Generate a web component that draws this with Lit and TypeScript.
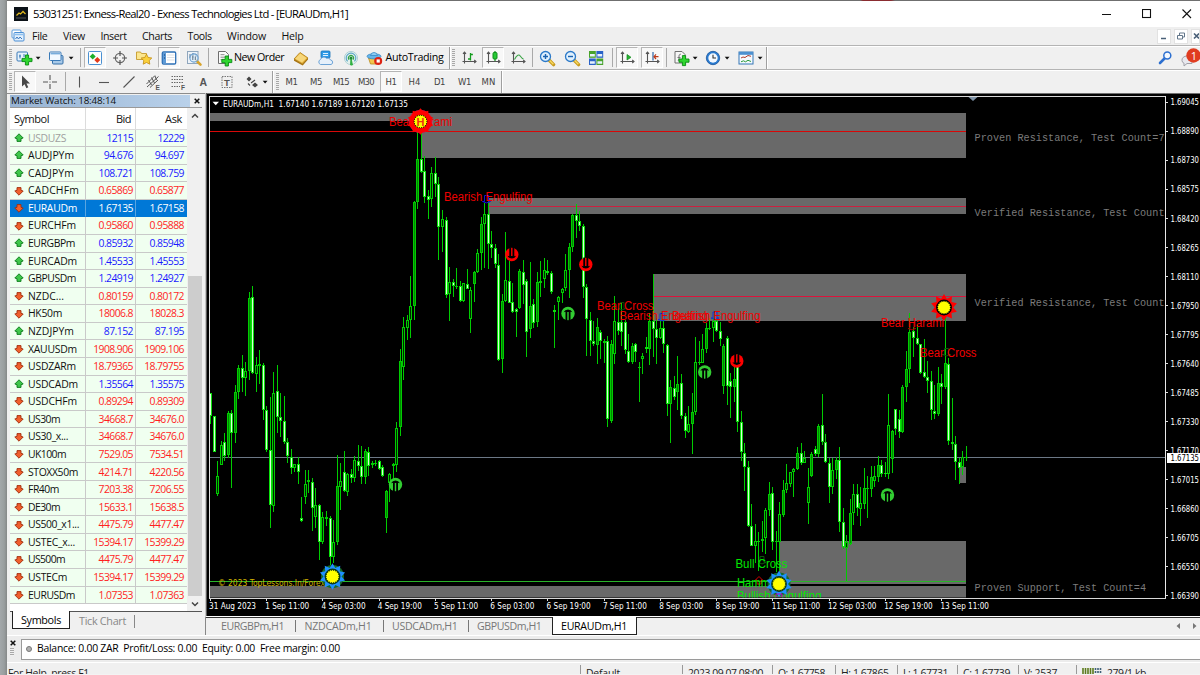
import { LitElement, html, svg, css } from "lit";
import { customElement, property } from "lit/decorators.js";
import { classMap } from "lit/directives/class-map.js";

/* A run of text whose tracking is adjusted so that it fills the given width. */
@customElement("fit-text")
class FitText extends LitElement {
  @property({ type: Number }) w = 0;
  static styles = css`
    :host { display: inline-block; white-space: pre; line-height: 1; }
  `;
  render() { return html`<slot></slot>`; }
  firstUpdated() {
    const n = (this.textContent || "").length;
    const now = this.getBoundingClientRect().width;
    if (n > 0 && this.w) this.style.letterSpacing = ((this.w - now) / n).toFixed(3) + "px";
  }
}

const fit = (t: string, w: number) => html`<fit-text .w=${w}>${t}</fit-text>`;

/* ---------- icons, drawn around the origin ---------- */
const plus = (x: number, y: number) => svg`<path d="M${x - 1.6} ${y - 5}h3.2v3.4h3.4v3.2h-3.4v3.4h-3.2v-3.4h-3.4v-3.2h3.4z" fill="#2fd62f" stroke="#078a12" stroke-width=".9"/>`;
const axes = svg`<path d="M-4.5 -5.5V5.5M-6.5 3.5H6.5M-6 -4.2l1.5 -1.8l1.5 1.8M5.2 2l1.8 1.5l-1.8 1.5" fill="none" stroke="#555" stroke-width="1.1"/>`;
const lens = (inner: any) => svg`<path d="M2 2l4.6 4.6" stroke="#c89a1c" stroke-width="3.4" stroke-linecap="round"/><path d="M2.4 2.2l4 4" stroke="#f8da64" stroke-width="1.3"/><circle cx="-1.5" cy="-1.5" r="5" fill="#dff0fd" stroke="#2b79c9" stroke-width="1.3"/>${inner}`;

const ICONS: Record<string, any> = {
  newchart: svg`<rect x="-7" y="-6" width="10.5" height="9" rx="1" fill="#e8f3fc" stroke="#3a7ab8"/><path d="M-4 -3.5v4M-5 -2h2M0 -4v3" stroke="#3a7ab8" fill="none"/>${plus(3, 2)}`,
  profiles: svg`<rect x="-3.5" y="-2.500" width="10.5" height="8.5" rx="1" fill="#a8c9e8" stroke="#346fa8"/><rect x="-6.5" y="-6" width="11.500" height="8.500" rx="1" fill="#f3f9ff" stroke="#3a7ab8"/><path d="M-5.5 -4.3h9.500" stroke="#79addb" stroke-width="1.4"/>`,
  market: svg`<rect x="-6.5" y="-6.5" width="13" height="13" rx="1" fill="#fdfeff" stroke="#4a90d2"/><path d="M-2.3 -4.500l3 3l-3 3l-3 -3z" fill="#1eaf2b"/><path d="M2.300 -1l3 3l-3 3l-3 -3z" fill="#e23a1a"/>`,
  target: svg`<circle r="4.7" fill="none" stroke="#666" stroke-width="1.2"/><path d="M0 -7v5M0 7v-5M-7 0h5M7 0h-5" stroke="#555" stroke-width="1.2"/>`,
  favorite: svg`<path d="M-7.5 -6h4l1 1.5h5v6h-10z" fill="#fbe68f" stroke="#c59a2a" stroke-width=".9"/><path d="M2.5 -3.8l1.7 3.3l3.6 .5l-2.6 2.6l.6 3.6l-3.3 -1.7l-3.3 1.7l.6 -3.6l-2.6 -2.6l3.6 -.5z" fill="#fbd13c" stroke="#c08a12" stroke-width=".8"/>`,
  panel: svg`<rect x="-6.7" y="-6" width="13.4" height="12" rx="1.3" fill="#fff" stroke="#2d70b7" stroke-width="1.3"/><rect x="-6" y="-5.3" width="3" height="10.6" fill="#5d9bd8"/><path d="M-2 -3h7.5M-2 -.5h7.5M-2 2h7.5" stroke="#d3d9e0" stroke-width=".8"/><path d="M-5 -3h1M-5 0h1" stroke="#12386a"/>`,
  tester: svg`<rect x="-6.5" y="-6.5" width="10.5" height="12" fill="#edf3f9" stroke="#8fa6bd"/><path d="M-4 -4v4M-1 -5v5M2 -4v3" stroke="#5d7388"/><path d="M2.8 3l3.7 3.6" stroke="#d8a42c" stroke-width="2.6" stroke-linecap="round"/><circle cx="0" cy="0" r="4.1" fill="#d9ecfb" fill-opacity=".6" stroke="#6a9fd0" stroke-width="1.1"/><path d="M-1.200 -2.500v4.500M1.300 -1.500v3.500" stroke="#5d7388"/>`,
  order: svg`<path d="M-5.5 -6.5h7l3 3v9h-10z" fill="#fafafa" stroke="#6e6e6e"/><path d="M-3.5 -3.3h4M-3.5 -.8h5M-3.5 1.7h3" stroke="#8a8a8a"/>${plus(2.8, 3)}`,
  gold: svg`<path d="M-7 1l6 -6.5l8 5.5l-5.5 6z" fill="#e9b53c" stroke="#b07c14" stroke-width=".8"/><path d="M-5.8 .8l5 -5.2l6.3 4.3l-4.5 4.7z" fill="#f7d77b"/><path d="M-7 1l8.5 5l5.5 -6v1.6l-5.3 5.9l-8.7 -4.8z" fill="#a87410"/>`,
  cloud: svg`<rect x="-5" y="-7" width="9" height="7" rx="1" fill="#2f9be8" stroke="#1871b8" stroke-width=".8"/><path d="M-3 -4.5h5M-3 -2.5h5" stroke="#dff1ff"/><path d="M-5.5 6.5a2.7 2.7 0 0 1 0 -5a3.5 3.5 0 0 1 6 -1.2a3 3 0 0 1 4 1.7a2.3 2.3 0 0 1 .5 4.5z" fill="#e6f0fa" stroke="#5d9ad3" stroke-width=".9"/>`,
  signal: svg`<circle r="6.6" fill="#e4f1ec" stroke="#a9cdd3" stroke-width=".9"/><path d="M-3.4 3.4a4.8 4.8 0 1 1 6.8 0" fill="none" stroke="#5ea7c8" stroke-width="1.2"/><path d="M-1.9 1.6a2.5 2.5 0 1 1 3.8 0" fill="none" stroke="#31a34a" stroke-width="1.2"/><path d="M0 0L1.4 7h-1.8z" fill="#30b040" stroke="#30b040"/><circle r="1.5" fill="#1d8a34"/>`,
  auto: svg`<path d="M-6.5 0h10l-2 6h-6z" fill="#f3c64d" stroke="#b88a1c" stroke-width=".8"/><ellipse cx="-1" cy="-1.700" rx="7" ry="2.6" fill="#66b5ea" stroke="#2f82c0" stroke-width=".7"/><path d="M-4.5 -2.500a3.6 4 0 0 1 7 0z" fill="#8fcdf3" stroke="#2f82c0" stroke-width=".7"/><circle cx="3.2" cy="3" r="4" fill="#dd2212"/><rect x="1.6" y="1.4" width="3.2" height="3.2" fill="#fff"/>`,
  bars: svg`${axes}<path d="M1.5 -5V2.5M1.5 -3.5h2.4M-1 1h2.5" stroke="#149c1e" stroke-width="1.3" fill="none"/>`,
  candles: svg`${axes}<path d="M2 -7V3" stroke="#0f8f1a" stroke-width="1.2"/><rect x="0" y="-5.5" width="4" height="6.5" rx="1" fill="#27c935" stroke="#0f8f1a"/>`,
  line: svg`${axes}<path d="M-3.5 1.5C-1 -3.5 1 -3.8 2.4 -1.8S4.5 .8 5.5 1" stroke="#3aa445" stroke-width="1.1" fill="none"/>`,
  zoomin: lens(svg`<path d="M-4 -1.5h5M-1.5 -4v5" stroke="#1b62b0" stroke-width="1.4"/>`),
  zoomout: lens(svg`<path d="M-4 -1.5h5" stroke="#1b62b0" stroke-width="1.4"/>`),
  tiles: svg`<rect x="-7" y="-7" width="6.8" height="6.800" fill="#48a32a"/><rect x=".4" y="-7" width="6.8" height="6.800" fill="#2a63c8"/><rect x="-7" y=".5" width="6.8" height="6.500" fill="#2a63c8"/><rect x=".4" y=".5" width="6.8" height="6.500" fill="#48a32a"/><path d="M-6 -4h4.800v2.400h-4.800zM1.400 -4h4.800v2.400h-4.800zM-6 3.300h4.800v2.400h-4.800zM1.400 3.300h4.800v2.400h-4.800z" fill="#e8f2fc"/>`,
  autoscroll: svg`${axes}<path d="M0 -3.5L4 -.7L0 2z" fill="#26b532" stroke="#128a1c" stroke-width=".7"/>`,
  shift: svg`${axes}<path d="M1 -6V2.5" stroke="#2d66a8" stroke-width="1.2"/><path d="M2 -1.3h4.5M4 -3.6L2 -1.3l2 2.3" stroke="#bd3a1a" stroke-width="1.2" fill="none"/>`,
  indicator: svg`<path d="M-6 -6.5h7l3 3v8.5h-10z" fill="#f6f6f6" stroke="#707070"/><path d="M-3 3c1 -1 1 -3 1 -5s1.500 -2 2 -1.500M-3.500 -.5h3" stroke="#777" fill="none"/>${plus(3, 2.6)}`,
  clock: svg`<circle r="6.7" fill="#2a7bd0" stroke="#1a559c" stroke-width=".8"/><circle r="4.7" fill="#f2f8ff"/><path d="M0 -3.2V0h3" stroke="#333" fill="none" stroke-width="1.1"/>`,
  template: svg`<rect x="-7" y="-6" width="14" height="12" fill="#f4f9fe" stroke="#3576b6"/><rect x="-7" y="-6" width="14" height="2.8" fill="#4b90d0"/><path d="M-5 0l2 -1l2 .5l3 -2l3 .8" stroke="#b03a2a" fill="none"/><path d="M-5 3.800l2.500 -1l2 1l2.500 -1.500l3 1.200" stroke="#2d9b3a" fill="none"/>`,
  pointer: svg`<path d="M-3 -6.500V4.500l2.600 -2.300l1.800 4l1.900 -.9l-1.800 -3.800h3.500z" fill="#484848"/>`,
  cross: svg`<path d="M0 -7v5M0 2v5M-7 0h5M2 0h5" stroke="#555" stroke-width="1.1"/><circle r=".6" fill="#555"/>`,
  vline: svg`<path d="M.5 -5.500V5.500" stroke="#555" stroke-width="1.1"/>`,
  hline: svg`<path d="M-5 .5H5" stroke="#555" stroke-width="1.1"/>`,
  diag: svg`<path d="M-5.500 5.500L5.500 -5.500" stroke="#555" stroke-width="1.1"/>`,
  channel: svg`<path d="M-6.500 2L2 -6.500M-6 5L5.500 -5.500M-3 5.500L5 -2M-4.500 -2l3 5M-1.500 -4.500l3 5.500M2 -6l1.500 4" stroke="#555" stroke-width="1"/><text x="2.500" y="8" font-size="6.500" class="it">E</text>`,
  fib: svg`<path d="M-6.500 -5.500H6M-6.500 -2.500H6M-6.500 .5H6M-6.500 4.500H2" stroke="#666" stroke-width="1" stroke-dasharray="1.500 1"/><text x="3" y="8" font-size="6.500" class="it">F</text>`,
  letter: svg`<text x="-3.600" y="4" font-size="10.500" class="it">A</text>`,
  label: svg`<rect x="-5" y="-5.500" width="10" height="11" fill="none" stroke="#777" stroke-dasharray="1.500 1"/><text x="-3" y="4" font-size="9.500" class="it">T</text>`,
  shapes: svg`<path d="M-5.500 -3l2.500 -2.500L-.5 -3L-3 -.5zM0 3l3 -2.500L6 3L3 5.500z" fill="#444"/><path d="M-4 1.500l2 2M-1 1l4 -3" stroke="#444" fill="none" stroke-width="1.100"/>`,
  drop: svg`<path d="M-2.300 -1.200h4.800L.1 1.500z" fill="#111"/>`,
};
const icon = (name: string, s = 18) => html`<svg class="ic" width=${s} height=${s} viewBox=${`${-s / 2} ${-s / 2} ${s} ${s}`}>${ICONS[name]}</svg>`;

/* Toolbar entries: kind, centre, width, optional label */
type Item = [string, number, number, string?];
const BAR1: Item[] = [
  ["grip", 10, 3], ["newchart", 24, 18], ["drop", 38, 6], ["profiles", 56, 18], ["drop", 70.5, 6], ["sep", 80.5, 1],
  ["+market", 95, 22], ["target", 120, 18], ["favorite", 144, 18], ["+panel", 169, 22], ["tester", 194, 18], ["sep", 208.5, 1],
  ["order", 224, 18], ["text", 259, 50, "New Order"], ["gold", 301, 18], ["cloud", 326, 18], ["signal", 351, 18], ["auto", 375, 18],
  ["text", 414.500, 58, "AutoTrading"], ["end", 450, 2], ["grip", 453.500, 3], ["bars", 469, 18], ["+candles", 493, 22], ["line", 518, 18],
  ["sep", 532.500, 1], ["zoomin", 547, 18], ["zoomout", 572, 18], ["tiles", 596, 18], ["sep", 612.500, 1], ["+autoscroll", 627, 22],
  ["+shift", 652, 22], ["sep", 666.500, 1], ["indicator", 681, 18], ["drop", 694.500, 6], ["clock", 713, 18], ["drop", 727, 6],
  ["template", 746, 18], ["drop", 759.500, 6], ["end", 767, 2],
];
const BAR2: Item[] = [
  ["grip", 10, 3], ["+pointer", 25, 22], ["cross", 50, 18], ["sep", 65, 1], ["vline", 79, 14], ["hline", 104, 14], ["diag", 129, 16],
  ["channel", 153, 18], ["fib", 178, 18], ["letter", 202.500, 14], ["label", 227, 14], ["shapes", 252, 16], ["drop", 265, 6], ["end", 273, 2],
  ["grip", 277, 3], ["tf", 291.500, 12, "M1"], ["tf", 316, 12, "M5"], ["tf", 341, 16, "M15"], ["tf", 366, 16, "M30"], ["+tf", 391, 22, "H1"],
  ["tf", 414.500, 12, "H4"], ["tf", 439.500, 11, "D1"], ["tf", 464.500, 13, "W1"], ["tf", 488.500, 14, "MN"], ["end", 502, 2],
];

const toolbar = (items: Item[]) => {
  let end = 7;
  return items.map(([k, c, w, label]) => {
    const gap = c - w / 2 - end;
    end = c + w / 2;
    const on = k[0] === "+";
    const name = on ? k.slice(1) : k;
    const st = `margin-left:${gap}px;width:${w}px`;
    if (name === "grip" || name === "sep" || name === "end") return html`<i class=${name} style=${st}></i>`;
    if (name === "text") return html`<span class="tbt" style=${st}>${fit(label!, w)}</span>`;
    if (name === "tf") return html`<span class=${classMap({ tf: true, on })} style=${st}>${fit(label!, on ? 11 : w)}</span>`;
    return html`<span class=${classMap({ slot: true, on })} style=${st}>${icon(name, name === "drop" ? 6 : 18)}</span>`;
  });
};

/* ---------- market watch ---------- */
const QUOTES: [string, string, string, number, number][] = [
  ["USDUZS", "12115", "12229", 1, 38], ["AUDJPYm", "94.676", "94.697", 1, 46], ["CADJPYm", "108.721", "108.759", 1, 46],
  ["CADCHFm", "0.65869", "0.65877", 0, 51], ["EURAUDm", "1.67135", "1.67158", 0, 49], ["EURCHFm", "0.95860", "0.95888", 0, 48],
  ["EURGBPm", "0.85932", "0.85948", 1, 47], ["EURCADm", "1.45533", "1.45553", 1, 49], ["GBPUSDm", "1.24919", "1.24927", 1, 48],
  ["NZDC...", "0.80159", "0.80172", 0, 36], ["HK50m", "18006.8", "18028.3", 0, 34], ["NZDJPYm", "87.152", "87.195", 1, 46],
  ["XAUUSDm", "1908.906", "1909.106", 0, 49], ["USDZARm", "18.79365", "18.79755", 0, 48], ["USDCADm", "1.35564", "1.35575", 1, 50],
  ["USDCHFm", "0.89294", "0.89309", 0, 49], ["US30m", "34668.7", "34676.0", 0, 32], ["US30_x...", "34668.7", "34676.0", 0, 40],
  ["UK100m", "7529.05", "7534.51", 0, 38], ["STOXX50m", "4214.71", "4220.56", 0, 50], ["FR40m", "7203.38", "7206.55", 0, 31],
  ["DE30m", "15633.1", "15638.5", 0, 32], ["US500_x1...", "4475.79", "4477.47", 0, 51], ["USTEC_x...", "15394.17", "15399.29", 0, 47],
  ["US500m", "4475.79", "4477.47", 0, 37], ["USTECm", "15394.17", "15399.29", 0, 39], ["EURUSDm", "1.07353", "1.07363", 0, 47],
];
const numW = (s: string) => [...s].reduce((a, ch) => a + (ch === "." ? 2.700 : 5.300), 0);
const arrow = (up: number) => html`<svg class="ar" width="10" height="10" viewBox="-5 -5 10 10"><path d="M0 -4.200L4.200 0L2 .7V3.400H-2V.7L-4.200 0z" transform=${up ? "" : "scale(1,-1)"} fill=${up ? "#3fc64b" : "#f0602c"} stroke=${up ? "#0a7a1a" : "#a02c0c"} stroke-width=".9"/></svg>`;

/* ---------- candles: high, body top, body bottom, low, kind ---------- */
const CANDLES = `393 393 416 424 d|416 416 452 452 d|461 476 494 496 u|441 445 465 465 u|433 442 456 461 d|411 413 455 458 g|410 413 433 488 d|385 392 433 443 g|365 368 392 399 g|355 368 378 392 d|362 371 378 396 u|292 298 371 380 g|286 297 373 374 d|357 365 374 392 u|350 364 366 384 u|363 365 410 420 d|406 410 450 452 d|397 450 505 528 d|372 393 506 512 u|365 391 417 433 d|393 417 421 437 d|396 421 442 444 d|438 442 456 463 d|449 457 468 474 d|464 464 468 472 u|457 464 472 484 d|497 518 521 522 d|470 484 497 504 u|470 480 482 493 u|478 482 508 531 d|488 505 517 528 u|504 505 542 560 d|512 517 542 544 u|511 517 519 526 u|516 518 557 565 d|520 542 557 563 u|455 486 542 545 g|463 481 487 510 u|451 472 491 492 d|473 474 492 496 u|469 474 478 483 d|456 460 478 482 u|445 461 466 471 d|446 466 477 484 d|449 451 477 484 g|447 452 466 476 d|461 463 465 468 u|460 463 464 466 u|460 461 469 470 d|465 467 476 477 d|490 491 518 533 g|473 474 483 502 u|463 464 466 482 u|422 428 465 472 u|349 361 427 436 g|317 327 367 380 u|315 320 328 340 u|276 306 320 338 u|201 202 306 320 g|132 159 202 209 g|132 159 172 173 d|156 171 197 203 d|190 196 200 219 d|167 173 199 207 u|157 173 184 197 d|177 184 227 260 d|210 219 227 252 u|217 220 295 298 d|267 282 294 321 u|279 282 286 297 d|268 286 287 289 u|281 286 301 302 d|283 283 301 302 u|269 284 289 289 d|287 290 319 333 u|271 272 284 302 g|249 253 272 273 u|217 224 253 270 g|203 214 224 268 u|202 214 244 269 d|231 244 248 258 d|244 248 264 268 d|254 265 360 361 d|294 301 359 373 g|232 280 301 302 u|261 281 303 303 d|283 302 312 313 d|308 309 312 337 d|269 271 308 309 g|260 272 285 304 d|279 281 332 357 d|262 306 329 338 g|299 304 323 328 d|272 282 322 327 g|261 281 283 297 u|258 270 279 288 u|260 271 273 275 d|271 273 292 294 d|305 310 312 348 d|296 297 302 320 u|288 289 293 303 u|254 270 288 291 u|243 247 270 298 g|214 215 247 252 g|204 215 221 238 d|211 221 226 231 d|224 226 287 298 d|284 287 319 356 d|312 320 341 356 d|321 341 344 346 d|318 327 345 364 g|330 332 341 359 d|339 341 343 363 u|336 341 419 427 d|340 344 421 423 g|296 321 354 364 u|308 322 331 335 d|303 322 332 346 d|320 322 350 354 d|334 351 362 363 d|343 346 362 364 g|343 344 352 362 d|362 367 368 402 u|353 356 359 374 u|337 347 349 353 d|313 321 349 365 g|274 321 329 357 d|318 329 338 364 d|320 328 338 339 u|317 328 344 353 d|344 345 404 416 d|380 387 404 443 g|376 388 397 400 d|356 384 392 410 g|374 383 416 419 d|413 416 431 438 d|406 424 432 433 u|393 412 424 454 g|337 362 412 415 u|341 362 363 365 u|334 349 363 363 u|323 328 349 353 g|318 328 329 330 u|318 321 328 342 u|318 321 331 332 d|322 331 339 346 d|344 346 386 394 g|336 338 386 405 d|373 381 387 418 d|363 379 387 402 g|354 355 422 432 d|411 422 452 461 d|443 453 467 491 d|461 467 526 527 d|504 526 546 546 d|524 541 546 563 u|532 541 542 571 u|521 539 541 552 u|508 510 538 554 u|482 494 510 516 g|487 493 542 550 d|531 541 542 572 u|502 514 542 571 u|480 490 515 517 g|464 483 490 493 u|472 472 484 487 u|468 469 472 497 u|447 453 469 470 g|443 453 463 465 d|451 458 463 463 u|468 487 503 524 u|452 454 476 477 g|446 449 454 456 d|424 426 454 457 g|394 425 442 445 d|434 442 462 463 d|458 463 487 503 d|458 470 487 494 u|457 460 470 479 g|447 460 522 532 d|508 522 547 549 d|535 542 548 581 u|499 513 544 545 g|484 494 513 525 u|484 494 508 516 d|487 503 509 526 u|468 488 504 509 g|476 488 489 518 u|466 477 489 497 g|466 476 481 487 u|456 465 477 482 g|460 465 474 477 d|462 473 474 477 d|394 425 474 479 u|430 431 459 473 g|409 409 429 435 d|410 419 432 438 d|385 387 432 433 g|351 369 387 402 g|313 332 369 383 g|327 331 338 357 d|325 338 344 345 d|344 344 373 374 d|339 372 377 378 d|361 377 381 393 d|371 381 410 420 d|385 411 414 419 d|367 383 414 416 g|374 383 387 404 d|317 363 387 389 g|358 364 441 445 d|398 442 444 450 d|436 444 462 480 d|458 462 468 484 d|451 457 467 475 u|446 457 458 461 u`
  .split("|").map((r, i) => {
    const p = r.split(" ");
    return { x: Math.round(210 + i * 3.515), h: +p[0], a: +p[1], b: +p[2], l: +p[3], k: p[4] };
  });

const candle = (c: { x: number; h: number; a: number; b: number; l: number; k: string }) => {
  const hgt = Math.max(1, c.b - c.a);
  return svg`<rect class="wk" x=${c.x} y=${c.h} width="1" height=${c.l - c.h}></rect>
    <rect class=${"bd " + c.k} x=${c.x - 1} y=${c.a} width="3" height=${hgt}></rect>
    ${hgt > 2 ? svg`<rect class=${"in " + c.k} x=${c.x} y=${c.a + 1} width="1" height=${hgt - 2}></rect>` : ""}`;
};

const star = (n: number, r1: number, r2: number) => {
  let d = "";
  for (let i = 0; i < n * 2; i++) {
    const r = i % 2 ? r2 : r1, t = (Math.PI * i) / n - Math.PI / 2;
    d += (i ? "L" : "M") + (r * Math.cos(t)).toFixed(2) + " " + (r * Math.sin(t)).toFixed(2);
  }
  return d + "z";
};
const sun = (x: number, y: number, kind: string) => svg`<g transform=${`translate(${x} ${y})`}>
  ${kind === "blue" ? svg`<circle r="11.500" fill="#146b2c"/><path d=${star(10, 13.200, 9)} fill="#1e90ff"/>`
    : kind === "disc" ? svg`<circle r="11.300" fill="#ff0000" stroke="#d8104a" stroke-width=".8"/><path d=${star(10, 13.200, 10)} fill="#ff0000"/>`
    : svg`<path d=${star(10, 13.500, 9.300)} fill="#ff0000"/>`}
  <circle r=${kind === "disc" ? 6.800 : 7.900} fill=${kind === "blue" ? "#0a3a14" : "#000"}/><path d=${star(18, 6.800, 5.700)} fill="#ffff00"/>
  ${kind === "disc" ? svg`<text x="-4" y="4" font-size="11" font-weight="bold" fill="#f03010" font-family="Liberation Sans">H</text>` : ""}</g>`;
const arch = (x: number, y: number, up: boolean) => svg`<g transform=${`translate(${x} ${y}) scale(1 ${up ? 1 : -1})`}>
  <circle r="6.700" fill=${up ? "#32cd32" : "#ff0000"}/>
  <path d="M-4.400 -1.200A4.900 4.900 0 0 1 4.400 -1.200L2.500 -1.800V7H.7V-1.500H-.7V7H-2.500V-1.800z" fill="#000"/></g>`;
const mark = (x: number, y: number, color: string) => svg`<path transform=${`translate(${x} ${y})`} d="M-2 -3.500H2V2.500H4L0 3.900L-4 2.500H-2z" fill="none" stroke=${color}/>`;
const note = (t: string, x: number, y: number, w: number, c: string) => svg`<text class=${"note " + c} x=${x} y=${y} textLength=${w} lengthAdjust="spacingAndGlyphs">${t}</text>`;

const PRICES = ["1.69045", "1.68890", "1.68730", "1.68575", "1.68420", "1.68265", "1.68110", "1.67950", "1.67795", "1.67640", "1.67485", "1.67330", "1.67170", "1.67015", "1.66860", "1.66705", "1.66550", "1.66390"];
const TIMES = ["31 Aug 2023", "1 Sep 11:00", "4 Sep 03:00", "4 Sep 19:00", "5 Sep 11:00", "6 Sep 03:00", "6 Sep 19:00", "7 Sep 11:00", "8 Sep 03:00", "8 Sep 19:00", "11 Sep 11:00", "12 Sep 03:00", "12 Sep 19:00", "13 Sep 11:00"];

@customElement("price-chart")
class PriceChart extends LitElement {
  static styles = css`
    :host { display: block; }
    svg { display: block; }
    rect { shape-rendering: crispEdges; }
    .wk { fill: #00cc00; }
    .bd { fill: #00cc00; }
    .bd.d { fill: #0be00b; }
    .in.u { fill: #002800; }
    .in.g { fill: #008800; }
    .in.d { fill: #d8ffd8; }
    .z { fill: #696969; }
    .note { font: 12px "Liberation Sans", Arial, sans-serif; }
    .red { fill: #f00000; }
    .lime { fill: #00e800; }
    .ax { font: 8.800px "DejaVu Sans Condensed", "DejaVu Sans", sans-serif; font-stretch: condensed; fill: #fff; }
    .ax.gold { fill: #d0b400; }
    .ax.dark { fill: #000; }
    .lv { font: 10.200px "Liberation Mono", monospace; fill: #7b7b7b; }
  `;
  render() {
    return html`<svg width="995" height="523" viewBox="205 93 995 523">
      <defs><clipPath id="plot"><rect x="210" y="97" width="956" height="500.500"></rect></clipPath></defs>
      <rect x="205" y="93" width="995" height="523" fill="#000"></rect>
      <rect x="205" y="93" width="995" height="1" fill="#6f6f6f"></rect>
      <rect x="205" y="93" width="1" height="523" fill="#c4c4c4"></rect>
      <rect x="206" y="93" width="1" height="523" fill="#5a5a5a"></rect>
      <g clip-path="url(#plot)">
        <rect class="z" x="210" y="113" width="756" height="8"></rect>
        <rect class="z" x="421" y="113" width="545" height="45"></rect>
        <rect class="z" x="488" y="198" width="478" height="16"></rect>
        <rect class="z" x="653" y="274" width="313" height="47"></rect>
        <rect class="z" x="779" y="541" width="187" height="43"></rect>
        <rect class="z" x="210" y="586" width="756" height="12"></rect>
        <rect class="z" x="959" y="467" width="7" height="16"></rect>
        <rect x="210" y="131" width="756" height="1" fill="#d80808"></rect>
        <rect x="488" y="206" width="478" height="1" fill="#cc2040"></rect>
        <rect x="653" y="296" width="313" height="1" fill="#dc143c"></rect>
        <rect x="210" y="581" width="756" height="1" fill="#28b428"></rect>
        <rect x="210" y="457" width="956" height="1" fill="#6c7886"></rect>
        ${CANDLES.map(candle)}
        ${mark(486.500, 199, "#1010e0")}${mark(662, 317, "#1030e0")}${mark(715, 315.500, "#1030e0")}
        ${mark(622, 306, "#0a4a0a")}${mark(762, 560, "#0a5a0a")}${mark(946.500, 352, "#0a5a0a")}${mark(912, 326, "#a00000")}
        <path d="M755.500 580L759 576.500L762.500 580H761V584H757V580z" fill="none" stroke="#d00000"></path>
        ${note("Bear Harami", 389, 125.700, 63, "red")}
        ${note("Bearish Engulfing", 444, 201, 88.500, "red")}
        ${note("Bear Cross", 597, 310.300, 56.500, "red")}
        ${note("Bearish Engulfing", 619.500, 320, 88.500, "red")}
        ${note("Bearish Engulfing", 672, 319.500, 88.500, "red")}
        ${note("Bear Harami", 881, 327, 63, "red")}
        ${note("Bear Cross", 920, 357, 56.500, "red")}
        ${note("Bull Cross", 735.500, 568, 52, "lime")}
        ${note("Hammer", 737, 586.500, 43, "lime")}
        ${note("Bullish Engulfing", 737, 600, 84.500, "lime")}
        <text class="ax gold" x="218" y="586.300" textLength="107" lengthAdjust="spacingAndGlyphs">© 2023 TopLessons.In/Forex</text>
        ${sun(420.500, 121.500, "disc")}${sun(944, 307.500, "red")}${sun(332.500, 576.500, "blue")}${sun(779, 584, "blue")}
        <path d="M776 597v-3h6v3" stroke="#c000c0" fill="none"></path>
        ${[[395.500, 484.500], [568, 313.500], [704.700, 372], [887.500, 495]].map(([x, y]) => arch(x, y, true))}
        ${[[511.800, 254.500], [585.800, 264.500], [736.800, 361]].map(([x, y]) => arch(x, y, false))}
        <text class="lv" x="974.500" y="140.500" textLength="190">Proven Resistance, Test Count=7</text>
        <text class="lv" x="974.500" y="215.500" textLength="190">Verified Resistance, Test Count</text>
        <text class="lv" x="974.500" y="306" textLength="190">Verified Resistance, Test Count</text>
        <text class="lv" x="974.500" y="591" textLength="171.500">Proven Support, Test Count=4</text>
        <path d="M968.500 97h9l-4.500 4z" fill="#7f93a8"></path>
      </g>
      <rect x="209" y="96" width="957" height="1" fill="#d8d8d8"></rect>
      <rect x="209" y="96" width="1" height="502" fill="#e0e0e0"></rect>
      <rect x="1165" y="96" width="1" height="502" fill="#e8e8e8"></rect>
      <rect x="209" y="598" width="957" height="1" fill="#d8d8d8"></rect>
      <path d="M212.500 101.800h6.500l-3.250 3.400z" fill="#fff"></path>
      <text class="ax" x="223" y="106.500" textLength="185" lengthAdjust="spacingAndGlyphs" xml:space="preserve">EURAUDm,H1  1.67140 1.67189 1.67120 1.67135</text>
      ${PRICES.map((p, i) => svg`<rect x="1166" y=${Math.round(101.500 + i * 29.050)} width="2" height="1" fill="#ddd"></rect>
        <text class="ax" x="1170.500" y=${105.300 + i * 29.050} textLength="28.500" lengthAdjust="spacingAndGlyphs">${p}</text>`)}
      <rect x="1167" y="453" width="33" height="10" fill="#fff"></rect>
      <text class="ax dark" x="1170.500" y="461" textLength="28.500" lengthAdjust="spacingAndGlyphs">1.67135</text>
      ${TIMES.map((t, i) => svg`<rect x=${Math.round(210 + i * 56.240)} y="599" width="1" height="2" fill="#ddd"></rect>
        <text class="ax" x=${209 + i * 56.270} y="609.300" textLength=${i === 0 ? 47 : i > 9 ? 48.500 : 44} lengthAdjust="spacingAndGlyphs">${t}</text>`)}
    </svg>`;
  }
}

@customElement("app-root")
class AppRoot extends LitElement {
  static styles = css`
    :host { display: flex; width: 1200px; height: 675px; overflow: hidden; font: 11.500px "Open Sans", "Noto Sans", sans-serif; color: #111; background: #f0f0f0; }
    * { box-sizing: border-box; }
    .desk { width: 7px; flex: none; background: linear-gradient(90deg, #a3a8aa, #999e9f 60%, #858888); }
    .win { width: 1193px; flex: none; display: flex; flex-direction: column; overflow: hidden; }
    .win > * { flex: none; }
    .edge { height: 1px; background: linear-gradient(90deg, #6f6f6f 853px, #8a2c30 856px 884px, #6f6f6f 888px); }
    .title { height: 26px; background: #fff; display: flex; align-items: center; padding-left: 7px; font-size: 11.200px; color: #000; }
    .title svg { margin-right: 5px; }
    .grow { flex: 1; }
    .caps { display: flex; align-items: center; margin-right: 8px; margin-top: -1px; gap: 30px; }
    .caps svg, .mdi svg { margin: 0; display: block; }
    .menu { height: 18px; background: #efefef; display: flex; align-items: center; padding: 0 0 0 4px; font-size: 10.600px; }
    .menu .m { margin-right: 15.500px; display: inline-flex; }
    .menu .m:first-of-type { margin-left: 7px; }
    .mdi { display: flex; gap: 3px; }
    .mdi i { width: 14px; height: 15px; background: #fff; border: 1px solid #e2e2e2; display: flex; align-items: center; justify-content: center; }
    .mdi i:last-child { width: 9px; }
    .tb { display: flex; align-items: center; height: 24px; background: #f0f0f0; border-top: 1px solid #b4b4b4; box-shadow: inset 0 1px #fff; }
    .tb > * { flex: none; }
    .tb svg, .slot svg { display: block; }
    .slot { height: 21px; display: flex; align-items: center; justify-content: center; }
    .ic { flex: none; }
    .on { background: #f8f8f8; border: 1px solid #b5b5b5; border-right-color: #fff; border-bottom-color: #fff; }
    .grip { height: 17px; background: repeating-linear-gradient(180deg, #a8a8a8 0 1px, #f0f0f0 1px 2px); }
    .sep { height: 19px; background: #a9a9a9; }
    .end { height: 22px; background: linear-gradient(90deg, #9f9f9f 50%, #fff 50%); }
    .tbt { font-size: 10.700px; color: #000; display: flex; white-space: nowrap; margin-top: -1px; }
    .tf { font: 8.500px "DejaVu Sans", sans-serif; color: #444; height: 21px; display: flex; align-items: center; justify-content: center; padding-top: 1px; }
    .it { font-family: "Liberation Sans", sans-serif; font-weight: 700; fill: #555; }
    .right { margin-left: auto; display: flex; }
    .body { height: 542px; display: flex; }
    .left { width: 198px; flex: none; display: flex; flex-direction: column; padding-left: 3px; border-top: 1px solid #8c8c8c; background: #f0f0f0; }
    .left > * { flex: none; }
    .mwh { height: 13px; display: flex; align-items: center; font-size: 9.800px; }
    .mwh .bar { width: 180px; height: 12px; background: linear-gradient(90deg, #97b3d3, #b9d1ea); display: flex; align-items: center; padding-left: 1px; }
    .mwh .x { margin-left: 4px; }
    .list { display: flex; width: 192px; height: 505px; background: #fff; border-top: 1px solid #999; border-bottom: 1px solid #555; }
    .tbl { width: 177px; }
    .row { display: grid; grid-template-columns: 76px 50px 51px; height: 17.580px; }
    .row > span { border-right: 1px solid #c9c9c9; border-bottom: 1px solid #c9c9c9; background: #f0fff0; display: flex; align-items: center; justify-content: flex-end; padding-right: 2px; font-size: 10.400px; }
    .row > span:first-child { justify-content: flex-start; padding-left: 4px; color: #111; }
    .row > span:last-child { border-right: 0; padding-right: 3px; }
    .row .ar { margin-right: 4px; }
    .row.up > span { color: #1a1aff; }
    .row.dn > span { color: #ff1e1e; }
    .row.up > span:first-child, .row.dn > span:first-child { color: #111; }
    .row.off > span:first-child { color: #a0a0a0; }
    .row.sel > span, .row.sel > span:first-child { background: #0078d7; color: #fff; border-right-color: #5aa5e0; border-bottom-color: #0078d7; }
    .row.hd { height: 21.500px; }
    .row.hd > span { background: #fff; border-color: #dcdcdc; font-size: 11px; color: #111; }
    .row.hd > span:nth-child(2) { padding-right: 4px; }
    .row.hd > span:nth-child(3) { padding-right: 5px; }
    .sb { width: 15px; background: #f0f0f0; display: flex; flex-direction: column; align-items: center; padding: 5px 0 4px; }
    .sb .thumb { margin-top: auto; margin-bottom: 5px; width: 14px; height: 320px; background: #cdcdcd; }
    .ltabs { display: flex; height: 18px; padding-left: 2px; font-size: 10.800px; color: #888; }
    .ltabs .a { width: 58px; height: 18px; background: #fff; border: 1px solid #222; border-top: 0; display: flex; align-items: center; justify-content: center; color: #000; margin-top: -1px; padding-top: 2px; }
    .ltabs .b { padding: 0 8px; margin: 3px 0 2px 1px; border-right: 1px solid #888; display: flex; align-items: center; }
    .rightcol { width: 995px; flex: none; display: flex; flex-direction: column; }
    .ctabs { display: flex; height: 20px; background: #f0f0f0; border-left: 1px solid #888; border-top: 1px solid #fff; box-shadow: inset 0 1px #333; color: #777; font-size: 10.600px; align-items: center; }
    .ctabs .t { border-right: 1px solid #777; height: 12px; display: flex; align-items: center; }
    .ctabs .act { background: #fff; border: 1px solid #222; border-top: 0; width: 85px; height: 18px; align-self: flex-start; display: flex; justify-content: center; align-items: center; color: #000; margin-left: -1px; padding-top: 1px; }
    .term { height: 27px; border-top: 1px solid #fff; display: flex; padding: 3px 0 2px 3px; background: #ececec; }
    .term .side { width: 11px; display: flex; flex-direction: column; align-items: flex-start; gap: 2px; padding-top: 1px; }
    .term .side .grip { width: 4px; height: 8px; }
    .term .box { flex: 1; background: #fff; border: 1px solid #9a9a9a; border-right: 0; display: flex; align-items: center; padding: 0 0 2px 4px; font-size: 10.400px; color: #000; }
    .dot { width: 6px; height: 6px; border-radius: 50%; background: #b0b0b0; border: 1px solid #777; margin: 1px 5px 0 0; }
    .status { height: 12px; overflow: hidden; display: flex; align-items: flex-start; border-top: 1px solid #fff; font-size: 10.400px; background: #f0f0f0; color: #222; padding-top: 2px; }
    .status > span { height: 16px; display: flex; align-items: center; flex: none; padding-left: 5px; border-left: 1px solid #999; }
    .status > span:first-child { border: 0; padding-left: 1px; }
    .status svg { margin-right: 5px; }
    .foot { height: 1px; background: #f3f3f3; }
  `;
  render() {
    const chev = (up: boolean) => html`<svg width="8" height="6" viewBox="0 0 8 6"><path d=${up ? "M1 4.500L4 1.500L7 4.500" : "M1 1.500L4 4.500L7 1.500"} fill="none" stroke="#444" stroke-width="1.500"/></svg>`;
    const x = (s: number) => html`<svg width=${s} height=${s} viewBox="0 0 6 6" style="display:block"><path d="M.7 .7L5.300 5.300M5.300 .7L.7 5.300" stroke="#111" stroke-width="1.500"/></svg>`;
    const menu: [string, number][] = [["File", 15.500], ["View", 22], ["Insert", 26], ["Charts", 30], ["Tools", 24], ["Window", 39], ["Help", 22]];
    const tabs: [string, number, number, number][] = [["EURGBPm,H1", 63, 15, 11], ["NZDCADm,H1", 67, 8.500, 11], ["USDCADm,H1", 65.500, 8.500, 10], ["GBPUSDm,H1", 64.500, 8.500, 10]];
    const status: [string, number, number][] = [["For Help, press F1", 573, 81], ["Default", 102, 34], ["2023.09.07 08:00", 90, 75], ["O: 1.67758", 63, 47], ["H: 1.67865", 62, 47.500], ["L: 1.67731", 60, 45], ["C: 1.67739", 61, 47], ["V: 2537", 58, 33]];
    return html`
      <div class="desk"></div>
      <div class="win">
        <div class="edge"></div>
        <div class="title">
          <svg width="14" height="14"><rect width="14" height="14" fill="#0c1218"/><path d="M2.500 8.500L5 6l1.500 1L9 4.500l2.500 2.500" stroke="#e0b820" stroke-width="1.300" fill="none"/><path d="M2 11h10" stroke="#555"/></svg>
          ${fit("53031251: Exness-Real20 - Exness Technologies Ltd - [EURAUDm,H1]", 315)}
          <span class="grow"></span>
          <span class="caps">
            <svg width="10" height="10"><path d="M0 5.500h9" stroke="#111" stroke-width="1"/></svg>
            <svg width="10" height="10"><rect x=".5" y=".5" width="8" height="8" fill="none" stroke="#111" stroke-width="1.100"/></svg>
            <svg width="10" height="10"><path d="M.5 .5l8.500 8.500M9 .5L.5 9" stroke="#111" stroke-width="1.100"/></svg>
          </span>
        </div>
        <div class="menu">
          <svg width="14" height="14"><rect x="1" y="1" width="9" height="8" rx="1" fill="#fff" stroke="#5a9bdc"/><rect x="3" y="3.500" width="10" height="8.500" rx="1" fill="#e3f0fc" stroke="#4a8fd6"/><path d="M4 5.500h8" stroke="#8fc0ef" stroke-width="1.500"/><path d="M4.500 10l1.500 -2l1.500 2l1.500 -2l2 2" fill="none" stroke="#3a78c0"/></svg>
          ${menu.map(([t, w]) => html`<span class="m">${fit(t, w)}</span>`)}
          <span class="grow"></span>
          <span class="mdi">
            <i><svg width="8" height="8"><path d="M1 6.500h5" stroke="#4a6078" stroke-width="1.500"/></svg></i>
            <i><svg width="8" height="8"><path d="M2.500 3V1h5v4H5.500M.5 3.500h5v3.500h-5z" fill="none" stroke="#62768a"/></svg></i>
            <i><svg width="6" height="8"><path d="M1 1.500l5 5M6 1.500l-5 5" stroke="#4a6078" stroke-width="1.600"/></svg></i>
          </span>
        </div>
        <div class="tb">${toolbar(BAR1)}
          <span class="right">
            <svg width="42" height="20"><path d="M2 15l4.500 -4.500" stroke="#2c6fd0" stroke-width="2.600" stroke-linecap="round"/><circle cx="9.300" cy="7.500" r="3.500" fill="#f4f9ff" stroke="#2c6fd0" stroke-width="1.500"/>
              <path d="M24 12.500a5 4 0 0 1 5 -4.500h5v7.500h-5l-3 2.500v-2.800a3 3 0 0 1 -2 -2.700z" fill="#e8e8ee" stroke="#a0a0a8"/>
              <circle cx="35.500" cy="7.500" r="7.200" fill="#e03c20"/><text x="32.800" y="11.500" font-size="11" fill="#fff" font-family="Open Sans">1</text></svg>
          </span>
        </div>
        <div class="tb">${toolbar(BAR2)}</div>
        <div class="body">
          <div class="left">
            <div class="mwh"><span class="bar">${fit("Market Watch: 18:48:14", 105)}</span><span class="x">${x(6)}</span></div>
            <div class="list">
              <div class="tbl">
                <div class="row hd"><span>${fit("Symbol", 35)}</span><span>${fit("Bid", 15)}</span><span>${fit("Ask", 17)}</span></div>
                ${QUOTES.map(([s, b, a, up, w], i) => html`<div class=${classMap({ row: true, up: !!up, dn: !up, sel: i === 4, off: i === 0 })}>
                  <span>${arrow(up)}${fit(s, w)}</span><span>${fit(b, numW(b))}</span><span>${fit(a, numW(a))}</span></div>`)}
              </div>
              <div class="sb">${chev(true)}<span class="thumb"></span>${chev(false)}</div>
            </div>
            <div class="ltabs"><span class="a">${fit("Symbols", 40)}</span><span class="b">${fit("Tick Chart", 47)}</span></div>
          </div>
          <div class="rightcol">
            <price-chart></price-chart>
            <div class="ctabs">
              ${tabs.map(([t, w, p, q]) => html`<span class="t" style=${`padding-left:${p}px;padding-right:${q}px`}>${fit(t, w)}</span>`)}
              <span class="act">${fit("EURAUDm,H1", 66)}</span>
              <span class="grow"></span>
              <svg width="24" height="8"><path d="M4 1v6L.5 4zM17 1v6l3.500 -3z" fill="#777"/></svg>
            </div>
          </div>
        </div>
        <div class="term">
          <span class="side">${x(6)}<i class="grip"></i></span>
          <div class="box"><i class="dot"></i>${fit("Balance: 0.00 ZAR  Profit/Loss: 0.00  Equity: 0.00  Free margin: 0.00", 303)}</div>
        </div>
        <div class="status">
          ${status.map(([t, cell, w]) => html`<span style=${`width:${cell}px`}>${fit(t, w)}</span>`)}
          <span><svg width="20" height="11"><path d="M1 0v11M3.500 0v11M6 0v11M8.500 0v11M11 0v11" stroke="#5c7a1c" stroke-width="1.600"/><path d="M13.500 0v11M16 0v11M18.500 0v11" stroke="#3e6078" stroke-width="1.600" stroke-dasharray="2 1"/></svg>${fit("279/1 kb", 39)}</span>
        </div>
        <div class="foot"></div>
      </div>`;
  }
}
